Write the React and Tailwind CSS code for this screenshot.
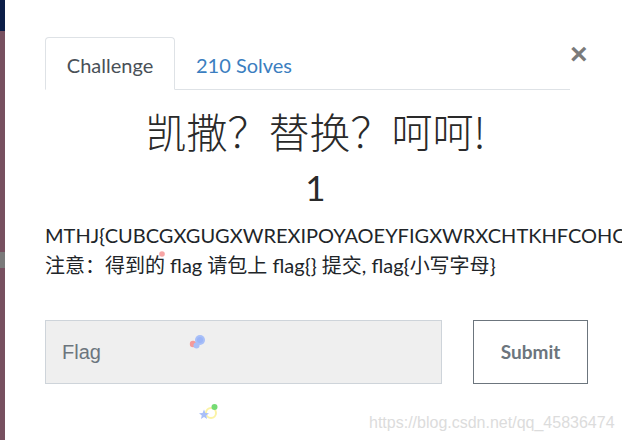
import React from "react";

export default function App() {
  return (
    <div className="relative flex h-[440px] w-[622px] overflow-hidden bg-white" style={{ fontFamily: "Lato, 'Noto Sans CJK SC', sans-serif" }}>
      <div className="flex w-[5px] shrink-0 flex-col">
        <div className="h-[31px] bg-[#0c1e48]" />
        <div className="h-[221px] bg-[#775060]" />
        <div className="h-[16px] bg-[#7a7a7a]" />
        <div className="flex-1 bg-[#775060]" />
      </div>
      <div className="flex w-[541px] shrink-0 flex-col pl-[40px] pt-[37px]">
        <div className="flex items-start">
          <div className="flex h-[53px] w-[525px] shrink-0 border-b border-[#dee2e6]">
            <div className="-mb-px flex h-[53px] w-[130px] items-center justify-center rounded-t-[4px] border border-[#dee2e6] border-b-white bg-white pt-[3px] text-[20px] text-[#495057]">
              Challenge
            </div>
            <div className="flex h-[53px] items-center pl-[21px] pt-[3px] text-[20px] text-[#3b7ec0]">210 Solves</div>
          </div>
          <div className="mt-[2px] text-[30px] leading-[30px] font-bold text-[#7a7a7a]" style={{ fontFamily: "'Liberation Sans', sans-serif" }}>×</div>
        </div>
        <div className="mt-[12px] w-[541px] text-center text-[41px] font-light leading-[56px] text-[#2a2a2a]" style={{ fontFamily: "'Noto Sans CJK SC', sans-serif" }}>
          凯撒？替换？呵呵!
        </div>
        <div className="mt-[7px] w-[541px] text-center text-[35px] leading-[44px] text-[#2a2a2a]">1</div>
        <div className="mt-[11px] text-[20px] leading-[30px] text-[#212529]">
          <div className="whitespace-nowrap">MTHJ{"{"}CUBCGXGUGXWREXIPOYAOEYFIGXWRXCHTKHFCOHC</div>
          <div className="whitespace-nowrap">注意：得到的 flag 请包上 flag{"{}"} 提交, flag{"{"}小写字母{"}"}</div>
        </div>
        <div className="mt-[40px] flex">
          <div className="flex h-[64px] w-[397px] shrink-0 items-center border border-[#ced4da] bg-[#efefef] pl-[16px] text-[20px] text-[#6c757d]" style={{ fontFamily: "'Liberation Sans', sans-serif" }}>
            Flag
          </div>
          <div className="ml-[31px] flex h-[64px] w-[115px] shrink-0 items-center justify-center border border-[#6c757d] text-[19px] font-bold text-[#6c757d]">
            Submit
          </div>
        </div>
      </div>
      <div className="absolute left-[369px] top-[411px] text-[16px] text-[#dcdcdc]" style={{ fontFamily: "'Liberation Sans', sans-serif" }}>
        https://blog.csdn.net/qq_45836474
      </div>
      <svg className="absolute left-[155px] top-[248px]" width="12" height="12" viewBox="0 0 12 12">
        <circle cx="7" cy="6" r="2.8" fill="#f7a5a5" />
      </svg>
      <svg className="absolute left-[186px] top-[330px]" width="24" height="20" viewBox="0 0 24 20">
        <circle cx="7" cy="14" r="3.2" fill="#f59a9a" />
        <circle cx="10.5" cy="15.5" r="3" fill="#a8bff8" />
        <circle cx="14" cy="10" r="5" fill="#a8bff8" />
        <circle cx="14" cy="10" r="3" fill="#9bb5f7" />
      </svg>
      <svg className="absolute left-[196px] top-[400px]" width="26" height="24" viewBox="0 0 26 24">
        <circle cx="15" cy="13" r="5" fill="none" stroke="#fbf3a6" strokeWidth="2" />
        <circle cx="18.5" cy="7" r="3" fill="#74db74" />
        <polygon points="8,9.5 9.4,13 13,13.2 10.2,15.4 11.1,19 8,17 4.9,19 5.8,15.4 3,13.2 6.6,13" fill="#a8bff8" />
      </svg>
    </div>
  );
}
